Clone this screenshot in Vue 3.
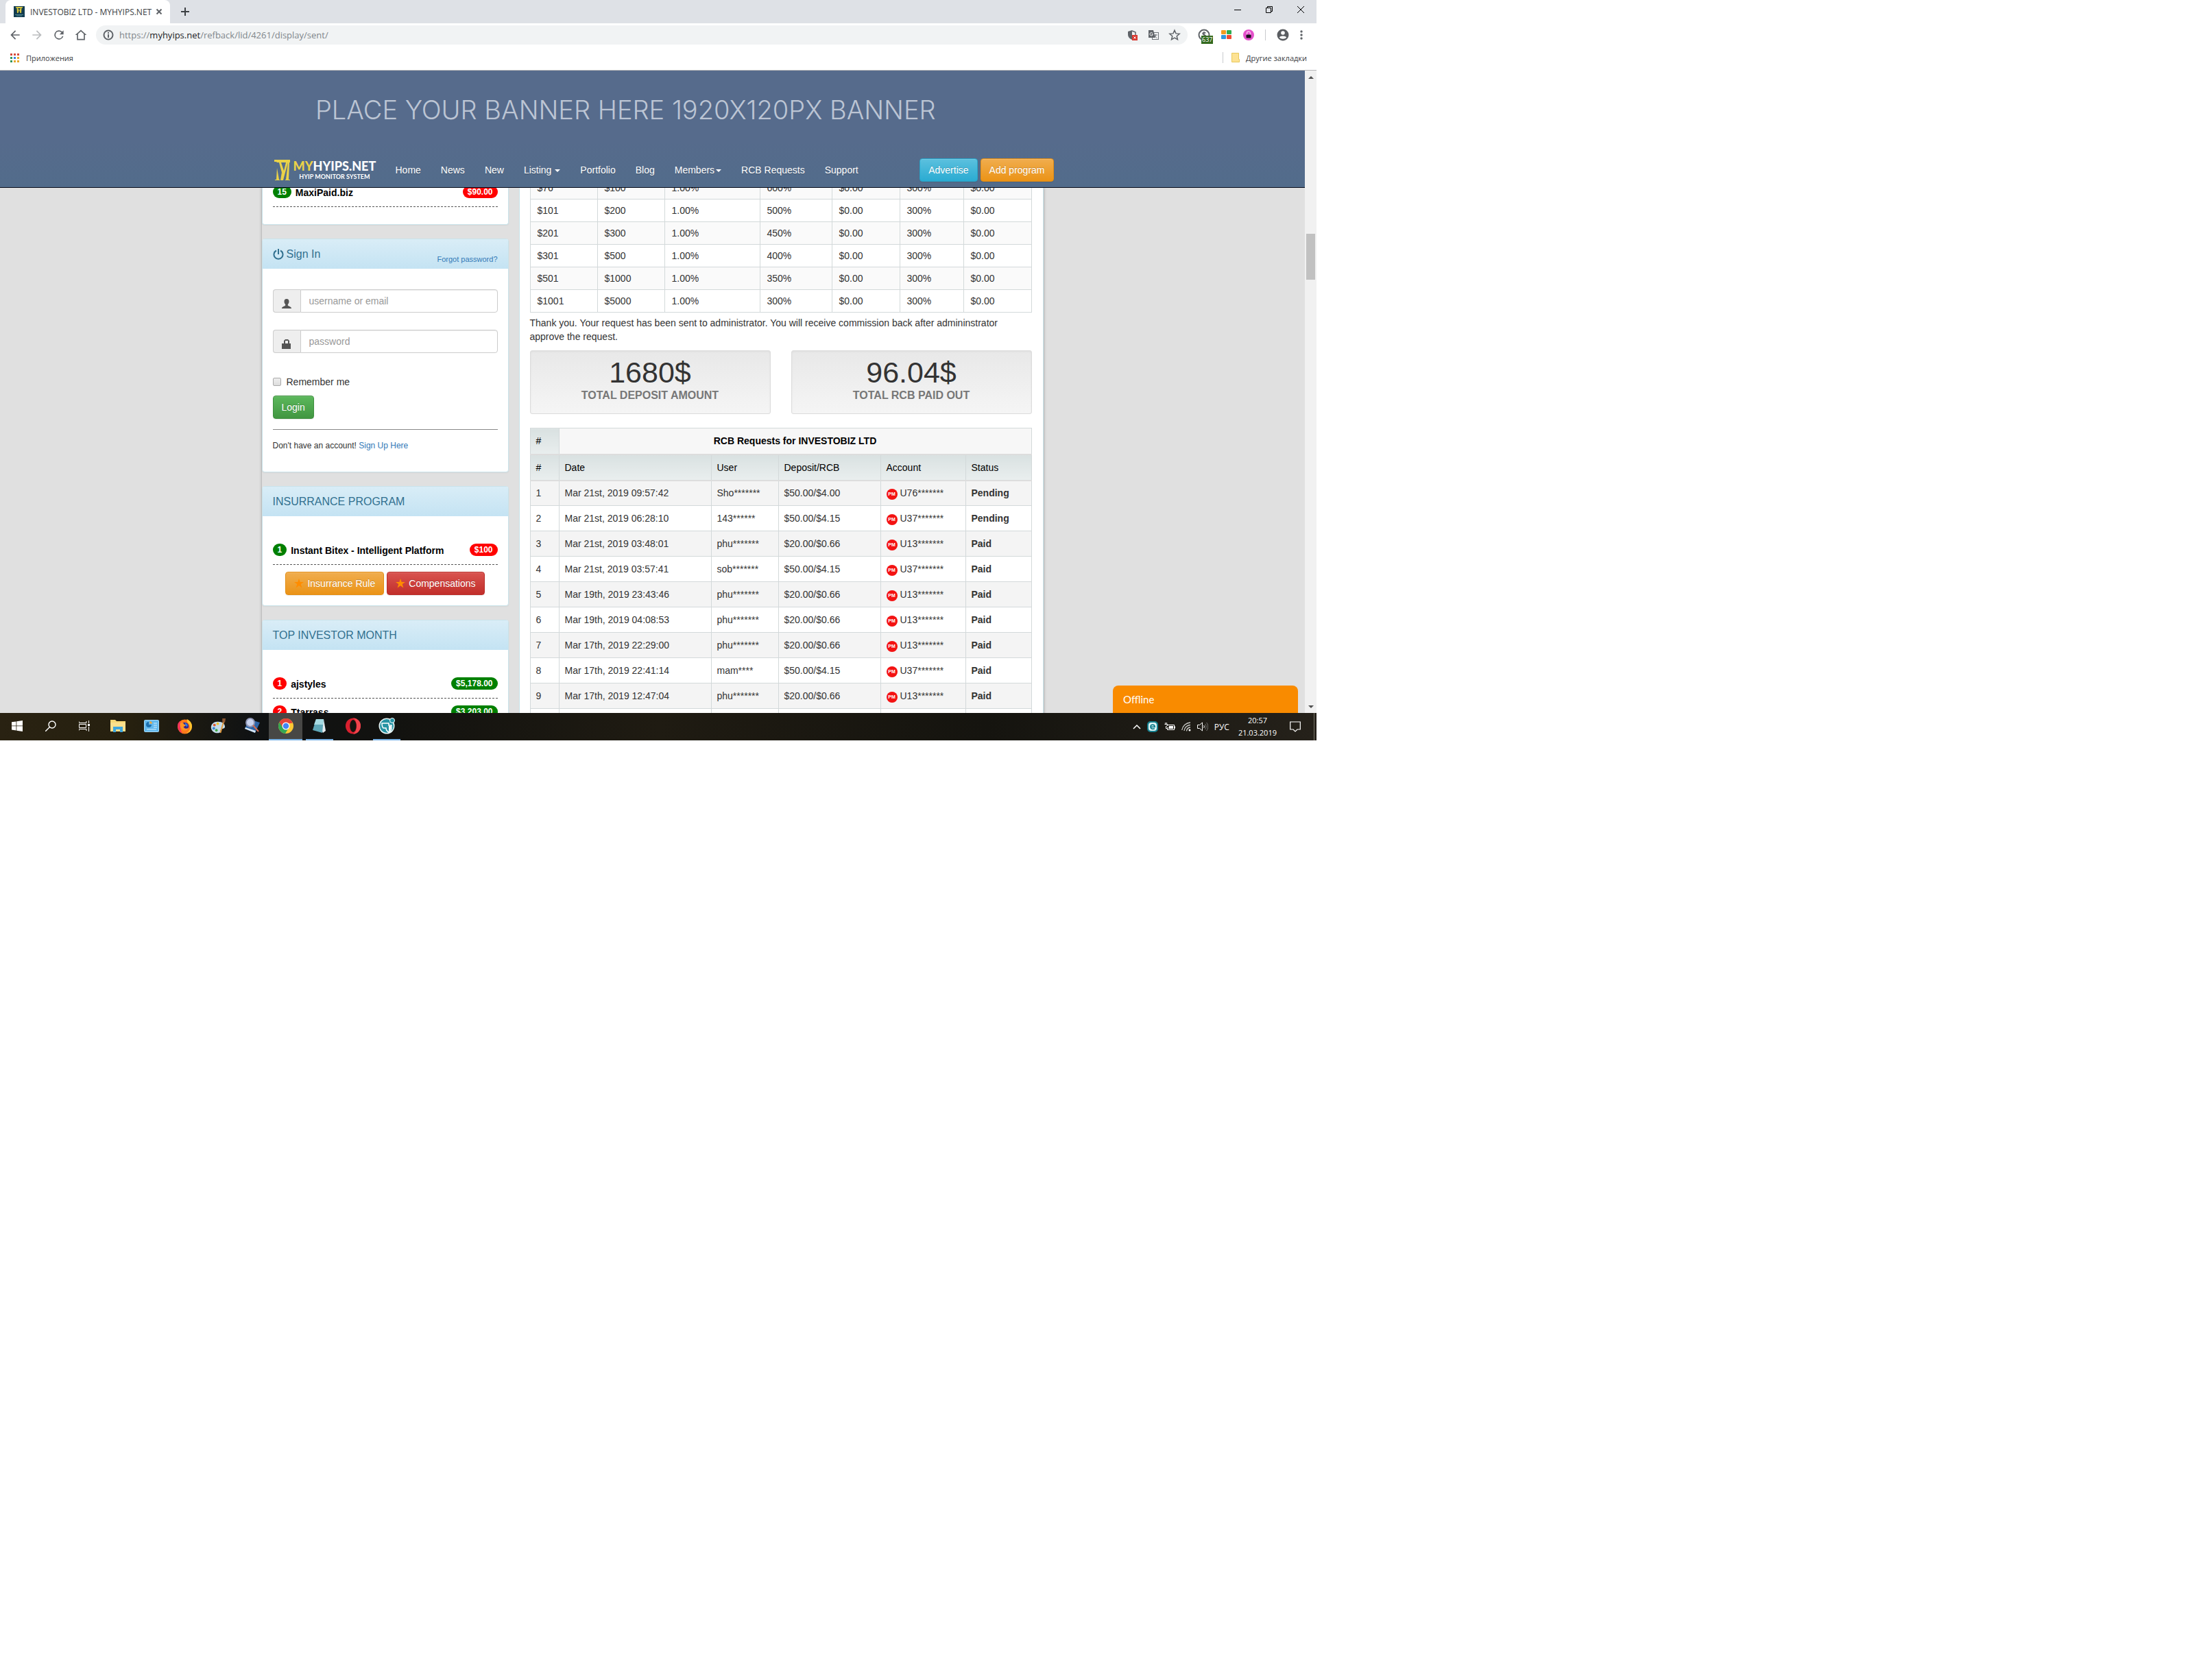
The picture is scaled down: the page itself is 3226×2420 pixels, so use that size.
<template>
  <div class="desktop">
    <div class="tabstrip">
      <div class="tab">
        <svg class="favicon" viewBox="0 0 16 16" width="16" height="16" aria-hidden="true">
          <rect width="16" height="16" fill="#123c50" />
          <path d="M3 1h10v1.500h-1.500L11 10H9.500L8 5 6.500 10H5L4.500 2.500H3z" fill="#d8c63c" />
          <path d="M6 3l2 3 2-3z" fill="#123c50" />
          <path d="M2 12.500h12M4 14h8" stroke="#4d8591" stroke-width="1" />
        </svg>
        <span class="tab-title">INVESTOBIZ LTD - MYHYIPS.NET</span>
        <button class="bare" aria-label="Close tab">
          <svg viewBox="0 0 16 16" width="16" height="16"><path d="M4.500 4.500l7 7M11.500 4.500l-7 7" stroke="#5f6368" stroke-width="2" /></svg>
        </button>
      </div>
      <button class="bare new-tab" aria-label="New tab">
        <svg viewBox="0 0 16 16" width="16" height="16"><path d="M8 2v12M2 8h12" stroke="#3c4043" stroke-width="2" /></svg>
      </button>
      <div class="window-buttons">
        <button class="bare" aria-label="Minimize">
          <svg viewBox="0 0 12 12" width="12" height="12"><path d="M1 6.500h10" stroke="#000" /></svg>
        </button>
        <button class="bare" aria-label="Restore">
          <svg viewBox="0 0 12 12" width="12" height="12" fill="none" stroke="#000"><path d="M1.500 3.500h7v7h-7zM3.500 3.500v-2h7v7h-2" /></svg>
        </button>
        <button class="bare" aria-label="Close">
          <svg viewBox="0 0 12 12" width="12" height="12"><path d="M1 1l10 10M11 1L1 11" stroke="#000" /></svg>
        </button>
      </div>
    </div>

    <div class="toolbar">
      <div class="nav-buttons">
        <button v-for="b in navButtons" :key="b.label" class="bare" :aria-label="b.label">
          <svg viewBox="0 0 24 24" width="20" height="20" :fill="b.fill"><path :d="b.path" /></svg>
        </button>
      </div>
      <div class="omnibox">
        <svg viewBox="0 0 16 16" width="16" height="16" fill="none" stroke="#5f6368" stroke-width="2" aria-hidden="true">
          <circle cx="8" cy="8" r="6.500" /><path d="M8 7v5M8 4v2" />
        </svg>
        <span class="url">https://<b>myhyips.net</b>/refback/lid/4261/display/sent/</span>
        <svg viewBox="0 0 16 16" width="16" height="16" aria-hidden="true">
          <path d="M7 1L1 3v4c0 4 2 6 6 8V1z" fill="#5f6368" />
          <path d="M7 2l5 2v4" fill="none" stroke="#5f6368" stroke-width="1.500" />
          <rect x="7" y="8" width="8" height="8" fill="#d93a32" />
          <path d="M9.500 10.500l3 3M12.500 10.500l-3 3" stroke="#fff" />
        </svg>
        <svg viewBox="0 0 16 16" width="16" height="16" aria-hidden="true">
          <rect x="6.500" y="4.500" width="9" height="10" fill="#f1f3f4" stroke="#70757a" />
          <path d="M1 1h7l3 11H1z" fill="#5f6368" />
          <path d="M7 5.500A2.200 2.200 0 1 0 7 8V7H5.500" fill="none" stroke="#fff" />
          <path d="M9 8h5M11.500 7v1c0 2-1 3-2 4M10 9c1 2 2 2.500 3.500 3.500" fill="none" stroke="#70757a" />
        </svg>
        <svg viewBox="0 0 24 24" width="18" height="18" aria-hidden="true">
          <path d="M12 3l2.700 6.200 6.800.600-5.200 4.500 1.600 6.600L12 17.400 6.100 20.900l1.600-6.600L2.500 9.800l6.800-.600z" fill="none" stroke="#5f6368" stroke-width="2" />
        </svg>
      </div>
      <div class="extensions">
        <span class="ext">
          <svg viewBox="0 0 18 18" width="18" height="18" fill="none" stroke="#5f6368" stroke-width="2">
            <circle cx="9" cy="9" r="7.500" />
            <path d="M11.500 6.500C11 5 7 5 7 7s4.500 1.500 4.500 3.500-4 2-4.500.500M9 4v10" stroke-width="1.500" />
          </svg>
          <span class="ext-count">637</span>
        </span>
        <svg viewBox="0 0 16 14" width="16" height="14" aria-hidden="true">
          <rect width="7" height="6" rx="1" fill="#f29a1f" /><rect x="8" width="7" height="6" rx="1" fill="#2eac4f" />
          <rect y="7" width="7" height="6" rx="1" fill="#3197de" /><rect x="8" y="7" width="7" height="6" rx="1" fill="#ee4b33" />
        </svg>
        <svg viewBox="0 0 16 16" width="16" height="16" aria-hidden="true">
          <circle cx="8" cy="8" r="8" fill="#e451cb" />
          <path d="M5.500 8V5.500a2.500 2.500 0 0 1 5 0V8" fill="none" stroke="#f9b6ef" stroke-width="1.500" />
          <rect x="4.500" y="7.500" width="7" height="5" rx="1" fill="#15101a" />
        </svg>
        <i class="separator"></i>
        <svg viewBox="0 0 18 18" width="18" height="18" aria-hidden="true">
          <circle cx="9" cy="9" r="8.500" fill="#5a5d61" />
          <circle cx="9" cy="6" r="2.800" fill="#fff" /><path d="M3.800 12.600C5 9.800 13 9.800 14.200 12.600 12 15.500 6 15.500 3.800 12.600z" fill="#fff" />
        </svg>
        <button class="bare" aria-label="Menu">
          <svg viewBox="0 0 4 14" width="4" height="14" fill="#5f6368"><circle cx="2" cy="2" r="1.700" /><circle cx="2" cy="7" r="1.700" /><circle cx="2" cy="12" r="1.700" /></svg>
        </button>
      </div>
    </div>

    <div class="bookmarks">
      <svg viewBox="0 0 14 13" width="14" height="13" aria-hidden="true">
        <rect v-for="(c, i) in appDots" :key="i" :x="(i % 3) * 5" :y="Math.floor(i / 3) * 5" width="3" height="3" :fill="c" />
      </svg>
      <a href="#apps">Приложения</a>
      <i class="separator"></i>
      <svg viewBox="0 0 12 14" width="12" height="14" aria-hidden="true">
        <path d="M.500.500h10v9h1v4h-11z" fill="#fde293" stroke="#e8c95c" />
      </svg>
      <a href="#bookmarks">Другие закладки</a>
    </div>

    <div class="browser-page">
      <div class="site">
        <header class="site-header">
          <div class="banner">PLACE YOUR BANNER HERE 1920X120PX BANNER</div>
          <nav class="navbar">
            <a class="logo" href="#home">
              <svg viewBox="0 0 24 32" width="24" height="32" fill="#ead248" aria-hidden="true">
                <path d="M0 1L23 1v4h-1l-1 25h2v1h-7v-1h1L20 5l-6 22h-1L7 5H4L3 4H0zM10 5l4 12 3-12z" />
                <path d="M4 13l3 17h1v1H1v-1h2z" />
                <path d="M11 19l3 8-1 4H9z" />
              </svg>
              <span class="logo-text">
                <span class="logo-name"><em>MY</em>HYIPS.NET</span>
                <span class="logo-sub">HYIP MONITOR SYSTEM</span>
              </span>
            </a>
            <a v-for="item in menu" :key="item.text" class="nav-link" href="#nav">{{ item.text }}<i v-if="item.caret" class="caret" :class="item.caret"></i></a>
            <div class="nav-actions">
              <button class="btn info">Advertise</button>
              <button class="btn warning">Add program</button>
            </div>
          </nav>
        </header>

        <div class="scroll-area">
          <div class="container">
            <aside class="sidebar">
              <section class="panel scrolled">
                <div class="rank-row">
                  <span class="badge green">15</span><a href="#maxipaid">MaxiPaid.biz</a><span class="badge red">$90.00</span>
                </div>
              </section>

              <section class="panel">
                <h2 class="panel-title">
                  <svg viewBox="0 0 16 16" width="16" height="16" fill="none" stroke="#31708f" stroke-width="2" aria-hidden="true">
                    <path d="M8 0v8M5 2.500a6.500 6.500 0 1 0 6 0" />
                  </svg>
                  Sign In
                  <a class="forgot" href="#forgot">Forgot password?</a>
                </h2>
                <form class="login" @submit.prevent>
                  <div class="input-group">
                    <label for="username" aria-label="username or email">
                      <svg viewBox="0 0 14 14" width="14" height="14" fill="#555">
                        <path d="M7 0C4.500 0 3.500 1.500 3.500 4c0 2 1 3 1.700 4v1.500C4 11 0 11 0 14h14c0-3-4-3-5.200-4.500V8c.700-1 1.700-2 1.700-4C10.500 1.500 9.500 0 7 0z" />
                      </svg>
                    </label>
                    <input id="username" type="text" placeholder="username or email" />
                  </div>
                  <div class="input-group">
                    <label for="password" aria-label="password">
                      <svg viewBox="0 0 14 14" width="14" height="14" fill="#555">
                        <path d="M0 6h3V2l2-2h4l2 2v4h2v8H0zM5 6h4V2H5z" fill-rule="evenodd" />
                      </svg>
                    </label>
                    <input id="password" type="password" placeholder="password" />
                  </div>
                  <label class="remember"><input type="checkbox" />Remember me</label>
                  <button class="btn success">Login</button>
                  <p class="signup">Don't have an account! <a href="#signup">Sign Up Here</a></p>
                </form>
              </section>

              <section class="panel insurance">
                <h2 class="panel-title">INSURRANCE PROGRAM</h2>
                <div class="panel-body">
                  <div class="rank-row">
                    <span class="badge green">1</span><a href="#bitex">Instant Bitex - Intelligent Platform</a><span class="badge red">$100</span>
                  </div>
                  <div class="rule-buttons">
                    <button class="btn warning"><svg viewBox="0 0 14 14" width="14" height="14" fill="#ff8c00"><path :d="star" /></svg>Insurrance Rule</button>
                    <button class="btn danger"><svg viewBox="0 0 14 14" width="14" height="14" fill="#ff8c00"><path :d="star" /></svg>Compensations</button>
                  </div>
                </div>
              </section>

              <section class="panel">
                <h2 class="panel-title">TOP INVESTOR MONTH</h2>
                <div class="panel-body">
                  <div v-for="(inv, i) in investors" :key="inv.name" class="rank-row">
                    <span class="badge red">{{ i + 1 }}</span><a href="#investor">{{ inv.name }}</a><span class="badge green">{{ inv.sum }}</span>
                  </div>
                </div>
              </section>
            </aside>

            <main class="main">
              <table class="rates">
                <colgroup><col class="w98" /><col class="w98" /><col class="w139" /><col class="w105" /><col class="w99" /><col class="w93" /><col /></colgroup>
                <tbody>
                  <tr v-for="r in rates" :key="r[0]">
                    <td>{{ r[0] }}</td><td>{{ r[1] }}</td><td>1.00%</td><td>{{ r[2] }}</td><td>$0.00</td><td>300%</td><td>$0.00</td>
                  </tr>
                </tbody>
              </table>
              <p class="notice">Thank you. Your request has been sent to administrator. You will receive commission back after admininstrator approve the request.</p>
              <div class="totals">
                <div class="well"><strong>1680$</strong><span>TOTAL DEPOSIT AMOUNT</span></div>
                <div class="well"><strong>96.04$</strong><span>TOTAL RCB PAID OUT</span></div>
              </div>
              <table class="requests">
                <colgroup><col class="w42" /><col class="w222" /><col class="w98" /><col class="w149" /><col class="w124" /><col /></colgroup>
                <thead>
                  <tr><th>#</th><th class="caption" colspan="5">RCB Requests for INVESTOBIZ LTD</th></tr>
                  <tr><th>#</th><th>Date</th><th>User</th><th>Deposit/RCB</th><th>Account</th><th>Status</th></tr>
                </thead>
                <tbody>
                  <tr v-for="(r, i) in requests" :key="i">
                    <td>{{ i + 1 }}</td>
                    <td>{{ r[0] }}</td>
                    <td>{{ r[1] }}</td>
                    <td>{{ r[2] }}</td>
                    <td><span class="account"><i class="pm">PM</i>{{ r[3] }}</span></td>
                    <td><b>{{ r[4] }}</b></td>
                  </tr>
                  <tr><td v-for="n in 6" :key="n"></td></tr>
                </tbody>
              </table>
            </main>
          </div>
          <button class="chat">Offline</button>
        </div>
      </div>
      <div class="scrollbar" aria-hidden="true">
        <i class="arrow up"></i>
        <i class="thumb"></i>
        <i class="arrow down"></i>
      </div>
    </div>

    <div class="taskbar">
      <button class="task" aria-label="Start">
        <svg viewBox="0 0 16 16" width="16" height="16" fill="#fff"><path d="M0 2.300L6.500 1.400v6.100H0zM7.300 1.300L16 0v7.500H7.300zM0 8.300h6.500v6.200L0 13.600zM7.300 8.300H16V16l-8.700-1.300z" /></svg>
      </button>
      <button class="task" aria-label="Search">
        <svg viewBox="0 0 16 16" width="16" height="16" fill="none" stroke="#fff" stroke-width="1.400"><circle cx="10" cy="6" r="5" /><path d="M6.500 9.500L0 16" /></svg>
      </button>
      <button class="task" aria-label="Task view">
        <svg viewBox="0 0 16 16" width="16" height="16" fill="none" stroke="#fff"><path d="M0 1v2.500h11V1M.500 5.500h10v5H.500zM0 15v-2.500h11V15M14.500 0v4M14.500 9v7" /><rect x="13" y="5" width="3" height="3" fill="#fff" stroke="none" /></svg>
      </button>
      <button class="task" aria-label="Explorer">
        <svg viewBox="0 0 22 20" width="22" height="20"><path d="M0 1h7l2 2h13v15H0z" fill="#f7d774" /><path d="M0 5h22v13H0z" fill="#fbe08d" /><path d="M4 19v-8h14v8h-4v-4H8v4z" fill="#3ea6dd" /></svg>
      </button>
      <button class="task" aria-label="Control panel">
        <svg viewBox="0 0 22 18" width="22" height="18"><rect x=".500" y=".500" width="21" height="17" rx="1" fill="#62b9ee" stroke="#a9dcf8" /><path d="M7 3a4 4 0 1 0 4 4H7z" fill="#1d6fae" /><path d="M8.500 2a4 4 0 0 1 3.500 3.500H8.500z" fill="#f3a73b" /><path d="M14 5h5M14 8h5M14 11h5M4 14h14" stroke="#d5effc" stroke-width="1" /></svg>
      </button>
      <button class="task" aria-label="Firefox">
        <svg viewBox="0 0 24 24" width="23" height="23"><circle cx="12" cy="12.500" r="11" fill="#ff7a1a" /><path d="M15 1c5 2 8 6 8 11.500A11 11 0 0 1 12 23c4-1 8-4 8-9 0-4-2-6-4-8z" fill="#ffc42e" /><path d="M2 7C0 13 2 20 9 23c-4-4-4-9-3-13L5 4z" fill="#f5315d" /><circle cx="12" cy="12" r="6" fill="#33258c" /><path d="M5 7c2-1 5 0 6 2l3 1c-1 2-3 2-4 3 2 3 5 3 8 1-2 5-8 6-11 2-2-2-3-6-2-9z" fill="#ff9424" /><path d="M12 6l4 3c1 1 0 3-1 4l-2-3z" fill="#2b7de1" /></svg>
      </button>
      <button class="task" aria-label="Paint">
        <svg viewBox="0 0 24 24" width="23" height="23"><path d="M12 5C5 4 0 9 1 15c1 5 6 8 12 7 3-1 1-3 3-5s5-1 6-4c0-5-4-8-10-8z" fill="#c4dcea" /><circle cx="6" cy="10" r="2" fill="#e0572f" /><circle cx="11" cy="8" r="2" fill="#f3c32d" /><circle cx="5" cy="15" r="2" fill="#3b86d2" /><circle cx="9" cy="18" r="2" fill="#45a848" /><path d="M20 5l-5 17" stroke="#e49b3f" stroke-width="2" /><path d="M18 0h5l-1 6h-4z" fill="#8b5530" /></svg>
      </button>
      <button class="task" aria-label="Viewer">
        <svg viewBox="0 0 24 24" width="24" height="24"><path d="M7 2l16 5-7 15L1 16z" fill="#2c64a8" /><path d="M1 16l15 6 1-3L2 14z" fill="#d7e6f2" /><circle cx="9" cy="7" r="6" fill="#c9d3ee" stroke="#8e95b4" stroke-width="2" /><path d="M13 11l8 9" stroke="#d26b4f" stroke-width="2" /></svg>
      </button>
      <button class="task active" aria-label="Chrome">
        <svg viewBox="0 0 24 24" width="24" height="24"><circle cx="12" cy="12" r="11" fill="#fcc934" /><path d="M12 12L2.500 6.500A11 11 0 0 1 21.500 6.500H12z" fill="#e3443a" /><path d="M2.500 6.500A11 11 0 0 0 11 23l5.500-9L12 12z" fill="#34a853" /><path d="M2.500 6.500L7.500 14.500 12 8h9.500A11 11 0 0 0 2.500 6.500z" fill="#e3443a" /><circle cx="12" cy="12" r="5.500" fill="#fff" /><circle cx="12" cy="12" r="4.300" fill="#4285f4" /></svg>
      </button>
      <button class="task open" aria-label="Notepad">
        <svg viewBox="0 0 24 24" width="24" height="24"><path d="M7 2h11l3 17-4 3z" fill="#e7edf0" /><path d="M7 2h11l-2 20L2 18z" fill="#5fa8b8" /><path d="M7 2h11l-1 8-13 0z" fill="#a6dbe2" /></svg>
      </button>
      <button class="task" aria-label="Opera">
        <svg viewBox="0 0 24 24" width="24" height="24"><ellipse cx="12" cy="12" rx="11" ry="11.500" fill="#d8202f" /><path d="M12 .500a11 11.500 0 0 1 0 23c4-2 5-7 5-11.500S16 2.500 12 .500z" fill="#f0444c" /><ellipse cx="12" cy="12" rx="4.800" ry="9" fill="#14140f" /></svg>
      </button>
      <button class="task running" aria-label="Security">
        <svg viewBox="0 0 24 24" width="24" height="24"><circle cx="12" cy="12" r="11.500" fill="#e8f5f6" /><circle cx="12" cy="12" r="10" fill="#2593a3" /><path d="M5 8h10v3h4v4c0 3-2 5-4 6-2-1-4-3-4-6H7c-2-2-2-5-2-7z" fill="#2593a3" stroke="#fff" stroke-width="1.500" /><path d="M15 12v8c2-1 3-3 3-5v-3z" fill="#fff" /><circle cx="20" cy="4" r="3.500" fill="#2593a3" stroke="#fff" /></svg>
      </button>

      <div class="tray">
        <svg viewBox="0 0 12 8" width="12" height="8" fill="none" stroke="#fff" stroke-width="1.500"><path d="M1 7l5-5 5 5" /></svg>
        <svg viewBox="0 0 16 16" width="16" height="16"><rect width="16" height="16" rx="5" fill="#16808f" /><rect x="2" y="2" width="12" height="12" rx="4" fill="#e2f6f7" /><path d="M4.800 8.300h6.400C11 4 5 4 5 8c0 3.500 4 4 5.800 2.500" fill="none" stroke="#16808f" stroke-width="1.800" /></svg>
        <svg viewBox="0 0 16 12" width="16" height="12" fill="none" stroke="#fff"><path d="M1.500 0v2M3.500 0v2M.500 2.500h4v2l-2 1v3h2M5 3.500h9.500v7H4.500V7" /><path d="M7 5h6v4H6z" fill="#fff" stroke="none" /><path d="M15.500 5.500v3" /></svg>
        <svg viewBox="0 0 14 14" width="14" height="14" fill="none" stroke="#c8c8c5" stroke-width="1.300"><path d="M.700 12A13 13 0 0 1 13 1M4 13a9.500 9.500 0 0 1 9-8.500M7.500 13.500A6 6 0 0 1 13 8" /><circle cx="12" cy="12" r="1.500" fill="#fff" stroke="none" /></svg>
        <svg viewBox="0 0 16 14" width="16" height="14" fill="none" stroke="#fff"><path d="M.500 4.500h3l4-3.500v12l-4-3.500h-3zM9.500 5c1 1 1 3 0 4" /><path d="M11.500 3c2 2 2 6 0 8M13.500 1c3 3 3 9 0 12" stroke="#777" /></svg>
        <span>РУС</span>
        <span class="clock">20:57<br />21.03.2019</span>
        <svg class="action" viewBox="0 0 16 16" width="16" height="16" fill="none" stroke="#fff" stroke-width="1.200"><path d="M.700 1h14.600v11H11l-3 3-3-3H.700z" /></svg>
        <i class="show-desktop"></i>
      </div>
    </div>
  </div>
</template>

<script setup>
const navButtons = [
  { label: 'Back', fill: '#5f6368', path: 'M20 11H7.800l5.600-5.600L12 4l-8 8 8 8 1.400-1.400L7.800 13H20z' },
  { label: 'Forward', fill: '#babcbe', path: 'M4 11h12.200l-5.600-5.600L12 4l8 8-8 8-1.400-1.400 5.600-5.600H4z' },
  { label: 'Reload', fill: '#5f6368', path: 'M17.650 6.350A8 8 0 1 0 19.730 14h-2.080A6 6 0 1 1 12 6c1.660 0 3.140.690 4.220 1.780L13 11h7V4z' },
  { label: 'Home', fill: '#5f6368', path: 'M12 3L2 12h3v9h14v-9h3zM12 5.700l5 4.500V19H7v-8.800z' }
]

const appDots = ['#d5493c', '#d5493c', '#d5493c', '#32965a', '#3a7ee0', '#e6a92e', '#32965a', '#e6a92e', '#e6a92e']

const menu = [
  { text: 'Home' },
  { text: 'News' },
  { text: 'New' },
  { text: 'Listing', caret: 'spaced' },
  { text: 'Portfolio' },
  { text: 'Blog' },
  { text: 'Members', caret: 'tight' },
  { text: 'RCB Requests' },
  { text: 'Support' }
]

const star = 'M7 0l1.700 5H14l-4.300 3 1.700 5.500L7 10.200 2.600 13.500 4.300 8 0 5h5.300z'

const investors = [
  { name: 'ajstyles', sum: '$5,178.00' },
  { name: 'Ttarrass', sum: '$3,203.00' }
]

const rates = [
  ['$76', '$100', '600%'],
  ['$101', '$200', '500%'],
  ['$201', '$300', '450%'],
  ['$301', '$500', '400%'],
  ['$501', '$1000', '350%'],
  ['$1001', '$5000', '300%']
]

const requests = [
  ['Mar 21st, 2019 09:57:42', 'Sho*******', '$50.00/$4.00', 'U76*******', 'Pending'],
  ['Mar 21st, 2019 06:28:10', '143******', '$50.00/$4.15', 'U37*******', 'Pending'],
  ['Mar 21st, 2019 03:48:01', 'phu*******', '$20.00/$0.66', 'U13*******', 'Paid'],
  ['Mar 21st, 2019 03:57:41', 'sob*******', '$50.00/$4.15', 'U37*******', 'Paid'],
  ['Mar 19th, 2019 23:43:46', 'phu*******', '$20.00/$0.66', 'U13*******', 'Paid'],
  ['Mar 19th, 2019 04:08:53', 'phu*******', '$20.00/$0.66', 'U13*******', 'Paid'],
  ['Mar 17th, 2019 22:29:00', 'phu*******', '$20.00/$0.66', 'U13*******', 'Paid'],
  ['Mar 17th, 2019 22:41:14', 'mam****', '$50.00/$4.15', 'U37*******', 'Paid'],
  ['Mar 17th, 2019 12:47:04', 'phu*******', '$20.00/$0.66', 'U13*******', 'Paid']
]
</script>

<style>
body{margin:0;background:#fff}
</style>

<style scoped>
*{box-sizing:border-box}
a{color:inherit;text-decoration:none}
svg{display:block;flex:none}
button{font-family:inherit}
.bare{display:flex;align-items:center;justify-content:center;padding:0;border:0;background:none}
.separator{width:1px;height:16px;background:#c9cbce}

.desktop{display:flex;flex-direction:column;max-width:1920px;height:100vh;max-height:1080px;overflow:hidden;font-family:"Liberation Sans",Arial,sans-serif;font-size:14px;color:#333}

/* browser chrome */
.tabstrip{display:flex;height:34px;flex:none;padding-left:8px;background:#dee1e6;font-family:"Open Sans","Noto Sans",sans-serif}
.tab{display:flex;align-items:center;gap:8px;width:240px;padding:0 8px 0 12px;border-radius:8px 8px 0 0;background:#fff;font-size:12px;color:#3c4043}
.tab-title{flex:1;min-width:0;white-space:nowrap}
.new-tab{width:44px}
.window-buttons{display:flex;margin-left:auto;height:28px}
.window-buttons .bare{width:46px}
.toolbar{display:flex;align-items:center;height:34px;flex:none;background:#fff;font-family:"Open Sans","Noto Sans",sans-serif}
.nav-buttons{display:flex;gap:12px;padding:0 12px}
.omnibox{display:flex;align-items:center;gap:14px;flex:1;height:28px;padding:0 10px;border-radius:14px;background:#f1f3f4}
.url{flex:1;margin-left:-6px;font-size:13px;color:#80868b}
.url b{font-weight:400;color:#202124}
.extensions{display:flex;align-items:center;gap:16px;padding:0 20px 0 15px}
.ext{position:relative}
.ext-count{position:absolute;left:5px;top:10px;padding:0 1px;background:#33691e;color:#fff;font-size:9px;line-height:12px}
.bookmarks{display:flex;align-items:center;gap:9px;height:35px;flex:none;padding:0 14px 2px 15px;border-bottom:1px solid #b5b6b8;background:#fff;font:11px "Open Sans","Noto Sans",sans-serif;color:#3c4043}
.bookmarks .separator{margin-left:auto;margin-right:3px}

.browser-page{display:flex;flex:1;min-height:0}
.site{display:flex;flex-direction:column;flex:1;min-width:0}
.scrollbar{display:flex;flex-direction:column;align-items:center;width:17px;background:#f1f1f1}
.thumb{width:13px;height:67px;margin-top:226px;background:#c1c1c1}
.arrow{border:4px solid transparent}
.arrow.up{margin-top:4px;border-bottom-color:#505050}
.arrow.down{margin-top:auto;margin-bottom:3px;border-top-color:#505050}

/* header */
.site-header{flex:none;border-bottom:1px solid #050a18;background:linear-gradient(#566b8c 60%,#526c8b)}
.banner{height:120px;padding-left:460px;font:300 38px/115px Inter,"Liberation Sans",sans-serif;color:#bcc5d4;white-space:nowrap;overflow:hidden}
.navbar{display:flex;align-items:center;max-width:1170px;height:50px;margin:0 auto;padding-left:33px}
.logo{display:flex;align-items:center;gap:4px;width:162px;font-family:Lato,sans-serif;color:#fff}
.logo-text{display:flex;flex-direction:column;align-items:center}
.logo-name{font-size:18px;line-height:20px;font-weight:900}
.logo-name em{font-style:normal;color:#ead248}
.logo-sub{font-size:9px;line-height:12px;font-weight:700}
.nav-link{padding:15px 14px 15px 15px;line-height:20px;color:#fff;text-shadow:0 1px 0 rgba(0,0,0,.25);white-space:nowrap}
.caret{display:inline-block;border:4px solid transparent;border-top-color:#fff;border-bottom:0;vertical-align:middle}
.caret.spaced{margin-left:5px}
.caret.tight{margin-left:2px}
.nav-actions{display:flex;gap:4px;margin-left:auto}

.btn{display:inline-flex;align-items:center;gap:5px;height:34px;padding:0 12px;border:1px solid;border-radius:4px;color:#fff;font-size:14px;line-height:20px;text-shadow:0 -1px 0 rgba(0,0,0,.2);box-shadow:inset 0 1px 0 rgba(255,255,255,.15),0 1px 1px rgba(0,0,0,.08);white-space:nowrap}
.btn.info{border-color:#28a4c9;background:linear-gradient(#5bc0de,#2aabd2)}
.btn.warning{border-color:#e38d13;background:linear-gradient(#f0ad4e,#eb9316)}
.btn.success{border-color:#3e8f3e;background:linear-gradient(#5cb85c,#419641)}
.btn.danger{border-color:#b92c28;background:linear-gradient(#d9534f,#c12e2a)}

.scroll-area{position:relative;flex:1;min-height:0;overflow:hidden;background:#e0e0e0}
.container{display:grid;grid-template-columns:360px minmax(0,1fr);gap:15px;max-width:1140px;margin:0 auto;box-shadow:0 0 4px rgba(0,0,0,.35)}

/* sidebar */
.panel{margin-bottom:20px;border:1px solid #c9e3ea;border-radius:4px;background:#fff;box-shadow:0 1px 2px rgba(0,0,0,.05)}
.panel.scrolled{margin-top:-13px;padding:0 15px 25px;border-top:0}
.panel-title{display:flex;align-items:center;gap:4px;height:43px;margin:0;padding:0 15px;background:linear-gradient(#d9edf7,#c4e3f3);font-size:16px;font-weight:400;color:#31708f}
.forgot{align-self:flex-end;margin:0 0 6px auto;font-size:11px;line-height:16px;color:#337ab7}
.panel-body{padding:30px 15px 0}
.rank-row{display:flex;align-items:center;height:41px;padding-bottom:2px;border-bottom:1px dashed #555;font-weight:700;color:#000}
.rank-row a{margin-left:6px;padding-top:2px}
.badge{padding:3px 7px;border-radius:10px;font-size:12px;line-height:12px;color:#fff}
.badge:last-child{margin-left:auto}
.badge.green{background:#008000}
.badge.red{background:#f00}
.rule-buttons{display:flex;justify-content:center;gap:4px;padding:10px 0 15px}
.login{padding:30px 15px 28px}
.input-group{display:flex;margin-bottom:25px}
.input-group label{display:flex;align-items:center;justify-content:center;width:40px;padding-top:8px;border:1px solid #ccc;border-right:0;border-radius:4px 0 0 4px;background:#eee}
.input-group input{flex:1;min-width:0;height:34px;padding:6px 12px;border:1px solid #ccc;border-radius:0 4px 4px 0;box-shadow:inset 0 1px 1px rgba(0,0,0,.075);font:14px "Liberation Sans",Arial,sans-serif}
.input-group input::placeholder{color:#999}
.remember{display:flex;align-items:center;gap:8px;height:20px;margin:32px 0 10px}
.remember input{appearance:none;width:12px;height:12px;margin:0;border:1px solid #aaa;border-radius:2px;background:linear-gradient(#eee,#ddd)}
.signup{margin:15px 0 0;padding-top:13px;border-top:1px solid #888;font-size:12px;line-height:20px}
.signup a{color:#337ab7}

/* main column */
.main{padding:0 16px 0 15px;border:solid #c9e3ea;border-width:0 1px;background:#fff}
table{width:100%;border-collapse:collapse;table-layout:fixed;font-size:14px;line-height:20px}
td,th{border:1px solid #d3d9da;text-align:left}
.rates{margin-top:-17px}
.rates td{height:33px;padding:0 10px}
.rates tr:nth-child(odd) td{background:#fafafa}
.w42{width:42px}
.w93{width:93px}
.w98{width:98px}
.w99{width:99px}
.w105{width:105px}
.w124{width:124px}
.w139{width:139px}
.w149{width:149px}
.w222{width:222px}
.notice{margin:5px 0 10px;line-height:20px}
.totals{display:grid;grid-template-columns:1fr 1fr;gap:30px}
.well{display:flex;flex-direction:column;align-items:center;height:93px;padding-top:9px;border:1px solid #dcdcdc;border-radius:3px;background:linear-gradient(#e8e8e8,#f5f5f5);box-shadow:inset 0 1px 3px rgba(0,0,0,.05)}
.well strong{font-size:43px;font-weight:400;line-height:45px;color:#333}
.well span{font-size:16px;font-weight:700;line-height:22px;color:#777}
.requests{margin:20px 0}
.requests td{height:37px;padding:0 8px}
.requests th{height:38px;padding:0 8px;font-weight:400;color:#000;background:linear-gradient(#d9e1e1,#e9eeee);border-bottom:2px solid #ddd}
.requests .caption{font-weight:700;text-align:center;background:#f7f7f7}
.requests tbody tr:nth-child(odd) td{background:#f4f4f4}
.account{display:flex;align-items:center;gap:4px}
.pm{display:flex;align-items:center;justify-content:center;width:16px;height:16px;margin-top:4px;border-radius:8px;background:#f31212;color:#fff;font-size:7px;font-style:normal;font-weight:700;line-height:16px}
.chat{position:absolute;right:10px;bottom:0;width:270px;height:40px;padding:0 15px;border:0;border-radius:8px 8px 0 0;background:#f98b00;color:#fff;font:15px Lato,sans-serif;text-align:left}

/* taskbar */
.taskbar{display:flex;height:40px;flex:none;background:linear-gradient(90deg,#292212,#26200f 10%,#101213 19%,#12120f 30%,#1f1b12 50%,#15140f 75%,#25211a)}
.task{display:flex;align-items:center;justify-content:center;width:49px;padding:0;border:0;border-bottom:2px solid transparent;background:none}
.task.active{border-color:#76b0e4;background:#474745}
.task.open,.task.running{background:linear-gradient(#76b0e4,#76b0e4) center bottom/40px 2px no-repeat border-box}
.tray{display:flex;align-items:center;gap:9px;margin-left:auto;font:12px "Open Sans","Noto Sans",sans-serif;color:#fff}
.clock{margin-left:4px;font-size:11px;line-height:18px;text-align:center}
.action{margin:0 10px}
.show-desktop{width:4px;height:40px;border-left:1px solid #777468}
</style>
